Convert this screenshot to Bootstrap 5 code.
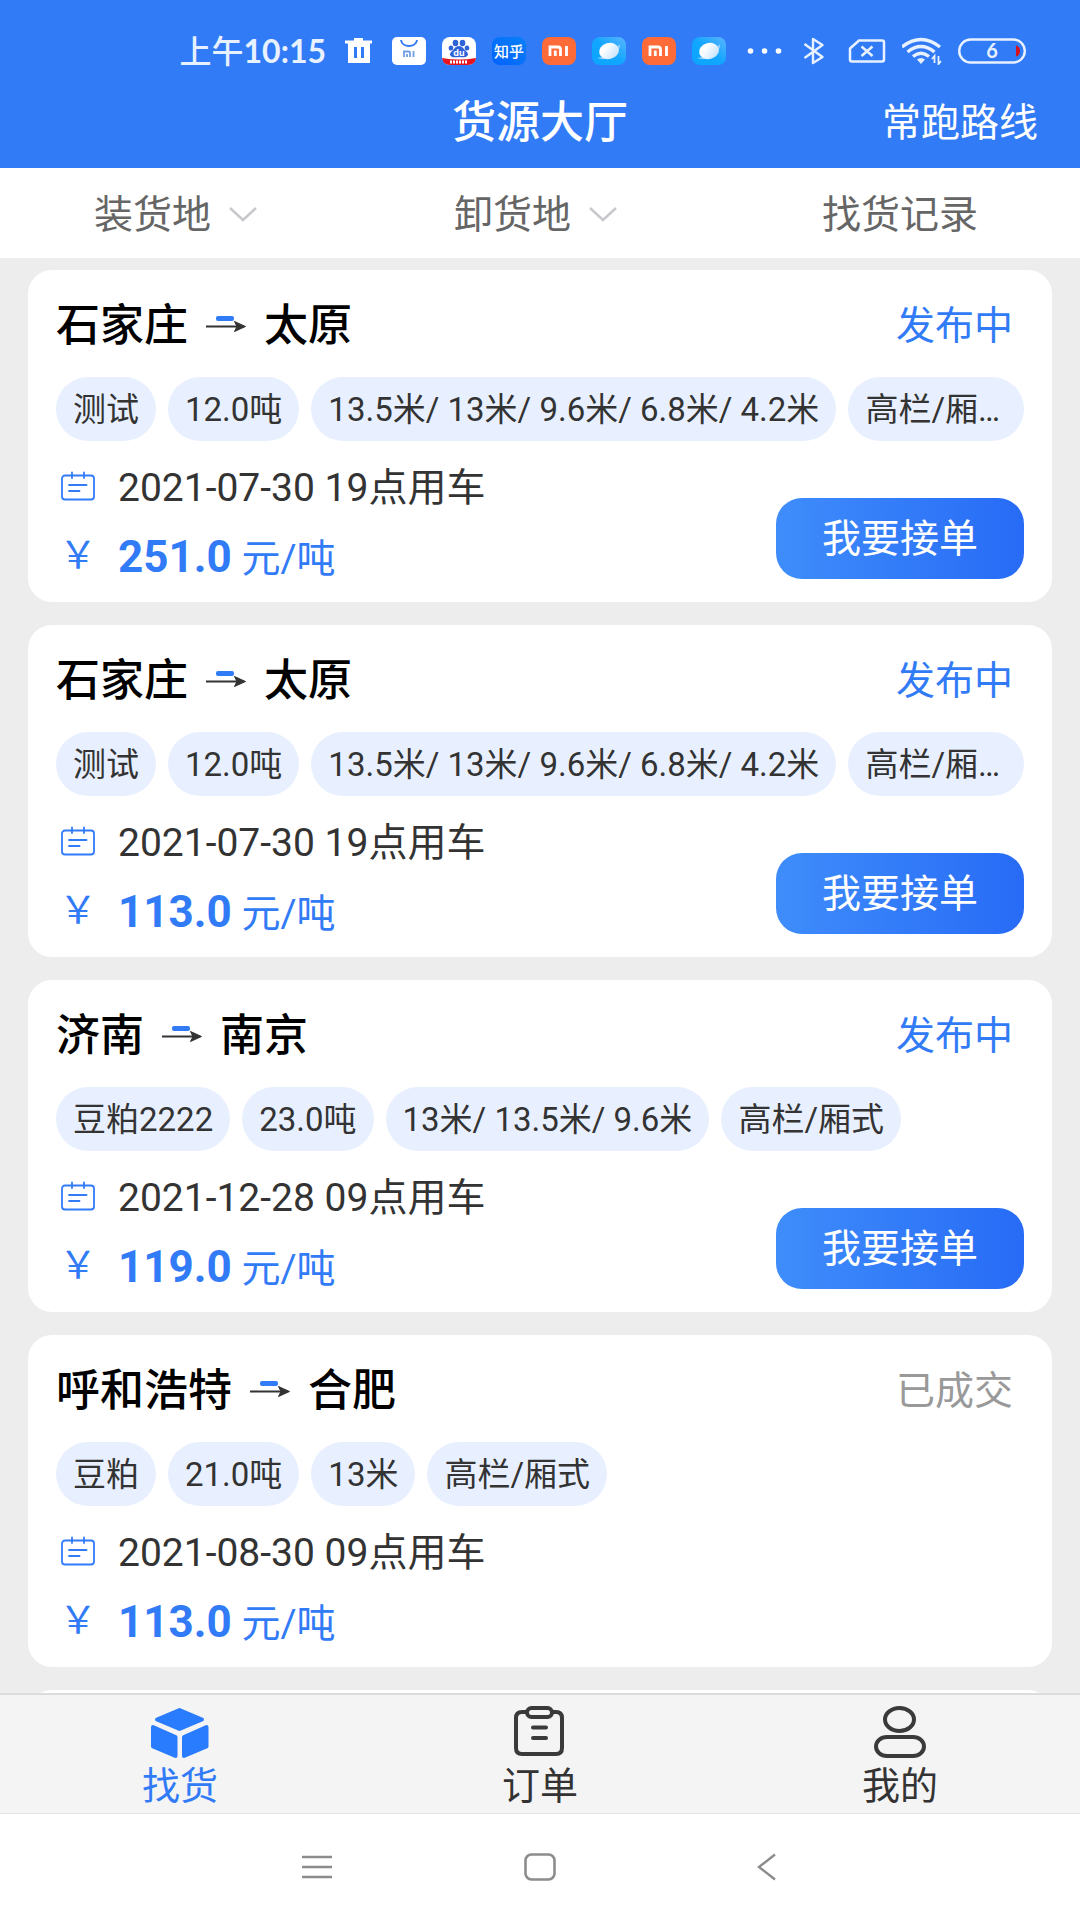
<!DOCTYPE html>
<html lang="zh-CN">
<head>
<meta charset="utf-8">
<meta name="viewport" content="width=device-width, initial-scale=1">
<title>货源大厅</title>
<link href="https://cdn.jsdelivr.net/npm/bootstrap@5.3.0/dist/css/bootstrap.min.css" rel="stylesheet">
<style>
  :root { --brand: #327bf7; --ink: #333; }
  body { font-family: Roboto, "Noto Sans CJK SC", sans-serif; font-size: 39px; line-height: 60px; color: var(--ink); background: #ededed; }
  svg { display: block; flex: none; }
  button { line-height: inherit; }
  .app-head { background: var(--brand); color: #fff; }
  .status-bar { height: 84px; padding: 18px 54px 0 20px; gap: 16px; }
  .clock { font: 700 32px/40px Lato, "Noto Sans CJK SC", sans-serif; color: #e8f1ff; }
  .clock span { font-weight: 500; }
  .title-bar { height: 84px; padding: 0 42px 6px; }
  .title-bar h1 { font-size: 44px; line-height: 60px; font-weight: 500; }
  .side { flex: 1 1 0; }
  .filters { height: 90px; background: #fff; }
  .filters button { gap: 16px; color: #666; font-size: 39px; padding-top: 4px; }
  .cargo-list { padding: 12px 28px 0; gap: 23px; }
  .cargo { flex: none; background: #fff; border-radius: 24px; padding: 28px 28px 13px; min-height: 332px; }
  .route { font-size: 44px; line-height: 56px; font-weight: 500; color: #000; gap: 16px; }
  .state { line-height: 56px; color: var(--brand); padding-right: 11px; }
  .state-done { color: #999; }
  .tags { gap: 12px; margin: 23px 0 17px; }
  .tag { font-size: 33px; line-height: 62px; padding: 2px 17px 0; border-radius: 36px; background: #e8f0ff; white-space: nowrap; flex: none; }
  .tag-last { flex: 0 1 auto; min-width: 0; overflow: hidden; text-overflow: ellipsis; }
  .info { gap: 11px; }
  .info > div { gap: 20px; padding-left: 2px; height: 60px; }
  .yen { width: 40px; font-size: 38px; line-height: 46px; text-align: center; font-family: "Noto Sans CJK SC", sans-serif; }
  .price { color: var(--brand); }
  .price strong { font-size: 44px; font-weight: 700; line-height: 44px; }
  .take { background: linear-gradient(90deg, #3f8dfb, #276bf6); color: #fff; border: 0; border-radius: 26px; width: 248px; height: 81px; font-size: 39px; margin-bottom: 10px; padding: 2px 0 0; }
  .tabs { background: #f4f4f4; border-top: 2px solid #dcdcdc; border-bottom: 1px solid #e2e2e2; height: 121px; }
  .tabs a { color: var(--ink); font-size: 38px; line-height: 50px; padding-top: 10px; }
  .tabs a.active { color: var(--brand); }
  .sys-nav { background: #fff; height: 106px; gap: 192px; }
</style>
</head>
<body>
<svg width="0" height="0" class="position-absolute" aria-hidden="true">
  <defs>
    <linearGradient id="sky" x1="0" y1="1" x2="1" y2="0"><stop offset="0" stop-color="#0aa5ff"/><stop offset=".5" stop-color="#12a6ff"/><stop offset="1" stop-color="#5ab4ff"/></linearGradient>
    <linearGradient id="ball" x1="0" y1="0" x2="1" y2="1"><stop offset=".3" stop-color="#fff"/><stop offset="1" stop-color="#b9ddfb"/></linearGradient>
    <linearGradient id="zh" x1="0" y1="1" x2="1" y2="0"><stop offset="0" stop-color="#0062ff"/><stop offset="1" stop-color="#0a80f5"/></linearGradient>
  </defs>
  <symbol id="i-arrow" viewBox="0 0 44 44"><rect x="12" y="12" width="18" height="5" rx="2" fill="#327bf7"/><path d="M2 22.500H38" stroke="#333" stroke-width="2" fill="none"/><path d="M30.500 17.500 41.500 22.500 30.500 27.500 33 22.500Z" fill="#333" stroke="#333" stroke-linejoin="round"/></symbol>
  <symbol id="i-cal" viewBox="0 0 40 34"><g fill="none" stroke="#327bf7" stroke-width="1.800" stroke-linecap="round"><rect x="4" y="4.500" width="32" height="24" rx="3"/><path d="M14 1.500V7M26 1.500V7M11 14H28.500M11 20H21.500"/></g></symbol>
  <symbol id="i-mi" viewBox="0 0 34 28"><rect width="34" height="28" rx="8" fill="#ff6a39"/><path d="M8 19V10H16Q18.500 10 18.500 12.500V19M13.300 13.500V19M24.500 9V19" fill="none" stroke="#fff" stroke-width="2.800"/></symbol>
  <symbol id="i-planet" viewBox="0 0 34 28"><rect width="34" height="28" rx="8" fill="url(#sky)"/><path d="M5 21Q16 20 28 7Q29 13 21 19Q13 24 5 21Z" fill="#8fcdfb"/><ellipse cx="17" cy="14" rx="10" ry="8" fill="url(#ball)" transform="rotate(-15 17 14)"/></symbol>
  <symbol id="i-down" viewBox="0 0 39 24"><path d="M3 5 16 17 29 5" fill="none" stroke="#c8c8cc" stroke-width="2.500"/></symbol>
</svg>

<div class="d-flex flex-column vh-100 overflow-hidden">
  <header class="app-head flex-shrink-0">
    <div class="status-bar d-flex align-items-center justify-content-end">
      <span class="clock"><span>上午</span>10:15</span>
      <svg width="34" height="28" viewBox="0 0 34 28"><path d="M3 3.500H12V1H21V3.500H30V6.500H28V26H6V6.500H3Z" fill="#fff"/><path d="M13.500 10V21M20.500 10V21" stroke="#327bf7" stroke-width="3"/></svg>
      <svg width="34" height="28" viewBox="0 0 34 28"><rect width="34" height="28" rx="5" fill="#fff"/><path d="M9 3C10 11 24 11 25 3" fill="none" stroke="#327bf7" stroke-width="2"/><path d="M12 20V14.500H16.500Q18 14.500 18 16V20M15 17V20M21.500 14V20" fill="none" stroke="#6f9fe8" stroke-width="1.800"/></svg>
      <svg width="34" height="28" viewBox="0 0 34 28"><rect width="34" height="28" rx="8" fill="#fff"/><g fill="#2e62d9"><ellipse cx="13.500" cy="6" rx="2.800" ry="3.200"/><ellipse cx="20.500" cy="6" rx="2.800" ry="3.200"/><ellipse cx="9" cy="11" rx="2.300" ry="2.600"/><ellipse cx="25" cy="11" rx="2.300" ry="2.600"/><path d="M17 9C21 9 22 13 25 15C28 19 24 21 17 20C10 21 6 19 9 15C12 13 13 9 17 9Z"/></g><text x="17" y="18.500" text-anchor="middle" font-family="Inter" font-weight="700" font-size="9" fill="#fff">du</text><path d="M0 21Q17 24 34 21Q33 28 26 28H8Q1 28 0 21Z" fill="#e5141e"/><path d="M8 25H26" stroke="#fff" stroke-width="3" stroke-dasharray="2 1"/></svg>
      <svg width="34" height="28" viewBox="0 0 34 28"><rect width="34" height="28" rx="8" fill="url(#zh)"/><text x="17" y="19.500" text-anchor="middle" font-family="Noto Sans CJK SC" font-weight="500" font-size="15" fill="#fff">知乎</text></svg>
      <svg width="34" height="28"><use href="#i-mi"/></svg>
      <svg width="34" height="28"><use href="#i-planet"/></svg>
      <svg width="34" height="28"><use href="#i-mi"/></svg>
      <svg width="34" height="28"><use href="#i-planet"/></svg>
      <svg width="42" height="28" viewBox="0 0 42 28" fill="#fff"><circle cx="8.500" cy="14" r="2.800"/><circle cx="22.500" cy="14" r="2.800"/><circle cx="36.500" cy="14" r="2.800"/></svg>
      <svg width="30" height="28" viewBox="0 0 30 28"><path d="M4.500 7 22.500 20 13 26V2L22.500 8 4.500 21" fill="none" stroke="#e8f1ff" stroke-width="2.400" stroke-linejoin="round"/></svg>
      <svg width="40" height="28" viewBox="0 0 40 28"><path d="M13 3.500H36Q38 3.500 38 5.500V22.500Q38 24.500 36 24.500H6Q4 24.500 4 22.500V11.500Z" fill="none" stroke="#e8f1ff" stroke-width="2.500" stroke-linejoin="round"/><path d="M15.500 9.500 26.500 19M26.500 9.500 15.500 19" stroke="#e8f1ff" stroke-width="2.500"/></svg>
      <svg width="40" height="28" viewBox="0 0 40 28"><g fill="none" stroke="#e8f1ff" stroke-width="3.400"><path d="M0 10Q19 -5 38 10M5.500 15Q19 4 32.500 15M11 19.500Q19 13 27 19.500"/></g><path d="M15 22.500Q19 19.500 23 22.500L19 27Z" fill="#e8f1ff"/><path d="M32.500 26V19L30 22M36.500 19V27L39 24" fill="none" stroke="#e8f1ff" stroke-width="1.800"/></svg>
      <svg width="68" height="28" viewBox="0 0 68 28"><rect x="1.200" y="2.500" width="65.600" height="23" rx="11.500" fill="none" stroke="#e8f1ff" stroke-width="2.400"/><path d="M58 8.500Q62 9.500 62 14Q62 18.500 58 19.500Z" fill="#d8101c"/><text x="34" y="21" text-anchor="middle" font-family="Lato" font-weight="700" font-size="20" fill="#e8f1ff">6</text></svg>
    </div>
    <div class="title-bar d-flex align-items-center">
      <div class="side"></div>
      <h1 class="m-0">货源大厅</h1>
      <div class="side text-end"><a href="#routes" class="text-white text-decoration-none">常跑路线</a></div>
    </div>
  </header>

  <nav class="filters row g-0 flex-shrink-0" aria-label="筛选">
    <button type="button" class="col btn border-0 px-0 pb-0 d-flex align-items-center justify-content-center">装货地<svg width="39" height="24"><use href="#i-down"/></svg></button>
    <button type="button" class="col btn border-0 px-0 pb-0 d-flex align-items-center justify-content-center">卸货地<svg width="39" height="24"><use href="#i-down"/></svg></button>
    <button type="button" class="col btn border-0 px-0 pb-0">找货记录</button>
  </nav>

  <main class="cargo-list d-flex flex-column flex-grow-1 overflow-hidden">
    <article class="cargo">
      <div class="d-flex justify-content-between">
        <h2 class="route d-flex align-items-center m-0">石家庄<svg width="44" height="44"><use href="#i-arrow"/></svg>太原</h2>
        <span class="state">发布中</span>
      </div>
      <div class="tags d-flex"><span class="tag">测试</span><span class="tag">12.0吨</span><span class="tag">13.5米/ 13米/ 9.6米/ 6.8米/ 4.2米</span><span class="tag tag-last">高栏/厢式</span></div>
      <div class="d-flex justify-content-between align-items-end">
        <div class="info d-flex flex-column">
          <div class="d-flex align-items-center"><svg width="40" height="34"><use href="#i-cal"/></svg><span>2021-07-30 19点用车</span></div>
          <div class="price d-flex align-items-center"><span class="yen align-self-start">￥</span><span><strong>251.0</strong> 元/吨</span></div>
        </div>
        <button type="button" class="btn take">我要接单</button>
      </div>
    </article>

    <article class="cargo">
      <div class="d-flex justify-content-between">
        <h2 class="route d-flex align-items-center m-0">石家庄<svg width="44" height="44"><use href="#i-arrow"/></svg>太原</h2>
        <span class="state">发布中</span>
      </div>
      <div class="tags d-flex"><span class="tag">测试</span><span class="tag">12.0吨</span><span class="tag">13.5米/ 13米/ 9.6米/ 6.8米/ 4.2米</span><span class="tag tag-last">高栏/厢式</span></div>
      <div class="d-flex justify-content-between align-items-end">
        <div class="info d-flex flex-column">
          <div class="d-flex align-items-center"><svg width="40" height="34"><use href="#i-cal"/></svg><span>2021-07-30 19点用车</span></div>
          <div class="price d-flex align-items-center"><span class="yen align-self-start">￥</span><span><strong>113.0</strong> 元/吨</span></div>
        </div>
        <button type="button" class="btn take">我要接单</button>
      </div>
    </article>

    <article class="cargo">
      <div class="d-flex justify-content-between">
        <h2 class="route d-flex align-items-center m-0">济南<svg width="44" height="44"><use href="#i-arrow"/></svg>南京</h2>
        <span class="state">发布中</span>
      </div>
      <div class="tags d-flex"><span class="tag">豆粕2222</span><span class="tag">23.0吨</span><span class="tag">13米/ 13.5米/ 9.6米</span><span class="tag tag-last">高栏/厢式</span></div>
      <div class="d-flex justify-content-between align-items-end">
        <div class="info d-flex flex-column">
          <div class="d-flex align-items-center"><svg width="40" height="34"><use href="#i-cal"/></svg><span>2021-12-28 09点用车</span></div>
          <div class="price d-flex align-items-center"><span class="yen align-self-start">￥</span><span><strong>119.0</strong> 元/吨</span></div>
        </div>
        <button type="button" class="btn take">我要接单</button>
      </div>
    </article>

    <article class="cargo">
      <div class="d-flex justify-content-between">
        <h2 class="route d-flex align-items-center m-0">呼和浩特<svg width="44" height="44"><use href="#i-arrow"/></svg>合肥</h2>
        <span class="state state-done">已成交</span>
      </div>
      <div class="tags d-flex"><span class="tag">豆粕</span><span class="tag">21.0吨</span><span class="tag">13米</span><span class="tag tag-last">高栏/厢式</span></div>
      <div class="info d-flex flex-column">
        <div class="d-flex align-items-center"><svg width="40" height="34"><use href="#i-cal"/></svg><span>2021-08-30 09点用车</span></div>
        <div class="price d-flex align-items-center"><span class="yen align-self-start">￥</span><span><strong>113.0</strong> 元/吨</span></div>
      </div>
    </article>

    <article class="cargo"></article>
  </main>

  <nav class="tabs row g-0 flex-shrink-0" aria-label="主导航">
    <a href="#find" class="active col d-flex flex-column align-items-center text-decoration-none" aria-current="page">
      <svg width="60" height="56" viewBox="0 0 60 56"><g fill="#2a7cff" stroke="#2a7cff" stroke-width="4" stroke-linejoin="round"><path d="M29.500 5 52 14.500 29.500 24 7 14.500Z"/><path d="M3 22 25.500 32V51L3 41.500Z"/><path d="M56.500 22 34 32V51L56.500 41.500Z"/></g></svg>
      找货
    </a>
    <a href="#orders" class="col d-flex flex-column align-items-center text-decoration-none">
      <svg width="60" height="56" viewBox="0 0 60 56"><g fill="none" stroke="#3a3a3a" stroke-width="4" stroke-linecap="round"><path d="M17 7H12Q6 7 6 13V43Q6 49 12 49H46Q52 49 52 43V13Q52 7 46 7H42"/><rect x="17" y="3" width="25" height="9" rx="4.500"/><path d="M23 22.500H36M23 33H36"/></g></svg>
      订单
    </a>
    <a href="#me" class="col d-flex flex-column align-items-center text-decoration-none">
      <svg width="60" height="56" viewBox="0 0 60 56"><g fill="none" stroke="#3a3a3a" stroke-width="4"><ellipse cx="29.500" cy="14.500" rx="14.500" ry="11.500"/><rect x="6" y="32" width="48" height="19" rx="11" ry="9.500"/></g></svg>
      我的
    </a>
  </nav>

  <div class="sys-nav d-flex align-items-center justify-content-center flex-shrink-0">
    <button type="button" class="btn border-0 p-0" aria-label="最近任务"><svg width="32" height="28" viewBox="0 0 32 28"><path d="M2 4H32M2 14H32M2 24H32" stroke="#8c8c8c" stroke-width="2.400"/></svg></button>
    <button type="button" class="btn border-0 p-0" aria-label="主屏幕"><svg width="32" height="28" viewBox="0 0 32 28"><rect x="1.500" y="1.500" width="29" height="25" rx="6" fill="none" stroke="#8c8c8c" stroke-width="2.600"/></svg></button>
    <button type="button" class="btn border-0 p-0" aria-label="返回"><svg width="32" height="28" viewBox="0 0 32 28"><path d="M27 1.500 11 14 27 26.500" fill="none" stroke="#8c8c8c" stroke-width="2.400"/></svg></button>
  </div>
</div>
<script src="https://cdn.jsdelivr.net/npm/bootstrap@5.3.0/dist/js/bootstrap.bundle.min.js"></script>
</body>
</html>
